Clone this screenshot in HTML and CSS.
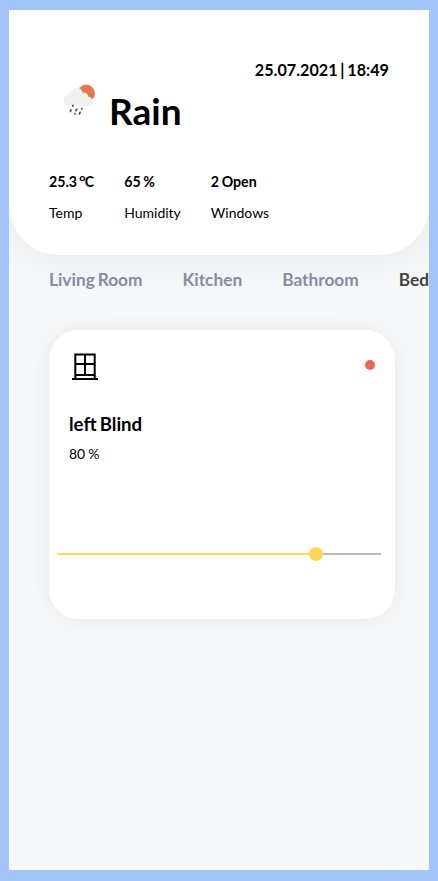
FILE: index.html
```html
<!DOCTYPE html>
<html lang="en">
<head>
<meta charset="utf-8">
<title>Smart Home</title>
<link rel="stylesheet" href="styles.css">
</head>
<body>
<main class="app">
  <header class="header">
    <div class="date">25.07.2021 | 18:49</div>
    <div class="weather">
      <svg class="weather-icon" width="34" height="34" viewBox="0 0 34 34">
        <circle cx="23.200" cy="9.300" r="8.700" fill="#df7a52"/>
        <path d="M6.500 22.300a6 6 0 0 1 .2-12 7.500 7.500 0 0 1 11-5.200 6.500 6.500 0 0 1 1.800 3.600 4.400 4.400 0 0 1 5.700 4 4.300 4.300 0 0 1 4.500 4.500 5 5 0 0 1-4.800 5.100z" fill="#f0f0f1"/>
        <path d="M10 21.600l-.2.500M8 26l-.6 1.300M13.700 25.200l-.7 1.500M18.900 24.500l-.2.400M17.100 28.400l-.7 1.500M12.100 29.700l-.1.200" stroke="#606060" stroke-width="1.900" stroke-linecap="round"/>
      </svg>
      <h1 class="condition">Rain</h1>
    </div>
    <dl class="stats">
      <div class="stat"><dt class="value">25.3 <span class="degree">°</span>C</dt><dd class="label">Temp</dd></div>
      <div class="stat"><dt class="value">65 %</dt><dd class="label">Humidity</dd></div>
      <div class="stat"><dt class="value">2 Open</dt><dd class="label">Windows</dd></div>
    </dl>
  </header>
  <nav class="rooms">
    <span class="room">Living Room</span>
    <span class="room">Kitchen</span>
    <span class="room">Bathroom</span>
    <span class="room active">Bedroom</span>
  </nav>
  <section class="card">
    <div class="card-top">
      <svg class="window-icon" width="32" height="32" viewBox="0 0 32 32" fill="none" stroke="#000" stroke-width="2">
        <path d="M6.300 28V4.500h19.400V28M7 14h18M16 4v21M7 25h18M3 29h26"/>
      </svg>
      <span class="status"></span>
    </div>
    <h2 class="name">left Blind</h2>
    <p class="level">80 %</p>
    <div class="slider"><div class="fill"></div><div class="thumb"></div><div class="rest"></div></div>
  </section>
</main>
</body>
</html>
```
FILE: styles.css
```css
* { box-sizing: border-box; }
body {
  margin: 0;
  height: 881px;
  padding: 10px 9px 11px;
  background: #a2c4f9;
  font-family: Lato, sans-serif;
  color: #000;
  overflow: hidden;
}
.app {
  height: 860px;
  background: #f7f8fa;
  overflow: hidden;
}
.header {
  height: 245px;
  padding: 50px 40px 0;
  background: #fff;
  border-radius: 0 0 50px 50px;
  box-shadow: 0 0 50px rgba(0, 0, 0, .08);
}
.date {
  line-height: 20px;
  font-size: 16.2px;
  font-weight: 700;
  text-align: right;
  word-spacing: -1.2px;
}
.weather {
  display: flex;
  height: 60px;
  margin-top: 2px;
  padding-left: 14px;
}
.weather-icon { margin-top: 2px; }
.condition {
  margin: 7px 0 0 12px;
  font-size: 37px;
  line-height: 44px;
}
.stats {
  display: flex;
  gap: 30px;
  margin: 31px 0 0;
}
.value {
  font-size: 14.2px;
  font-weight: 700;
  line-height: 18px;
  word-spacing: -.8px;
}
.degree {
  margin: 0 -1px 0 -.6px;
  font-size: 16px;
  line-height: 1;
}
.label {
  margin: 13px 0 0;
  font-size: 14px;
  line-height: 17px;
}
.rooms {
  display: flex;
  gap: 40px;
  padding: 14px 0 0 40px;
  font-size: 17.3px;
  font-weight: 700;
  line-height: 22px;
  word-spacing: -1.3px;
  color: #858da1;
  white-space: nowrap;
}
.active { color: #434343; }
.card {
  width: 346px;
  height: 289px;
  margin: 39px 0 0 40px;
  padding: 20px;
  background: #fff;
  border-radius: 30px;
  box-shadow: 0 0 30px rgba(0, 0, 0, .07);
}
.card-top {
  display: flex;
  justify-content: space-between;
}
.status {
  width: 10px;
  height: 10px;
  margin-top: 10px;
  border-radius: 50%;
  background: #ec6753;
}
.name {
  margin: 31px 0 0;
  font-size: 18.6px;
  line-height: 22px;
  word-spacing: -1.4px;
}
.level {
  margin: 10px 0 0;
  font-size: 14px;
  line-height: 18px;
  word-spacing: -.6px;
}
.slider {
  display: flex;
  align-items: center;
  height: 14px;
  margin: 84px -6px 0 -12px;
}
.fill {
  width: 252px;
  height: 2px;
  background: #fcd75b;
}
.thumb {
  width: 14px;
  height: 14px;
  border-radius: 50%;
  background: #fcd75b;
}
.rest {
  flex: 1;
  height: 2px;
  background: #b9b9b9;
}
```
